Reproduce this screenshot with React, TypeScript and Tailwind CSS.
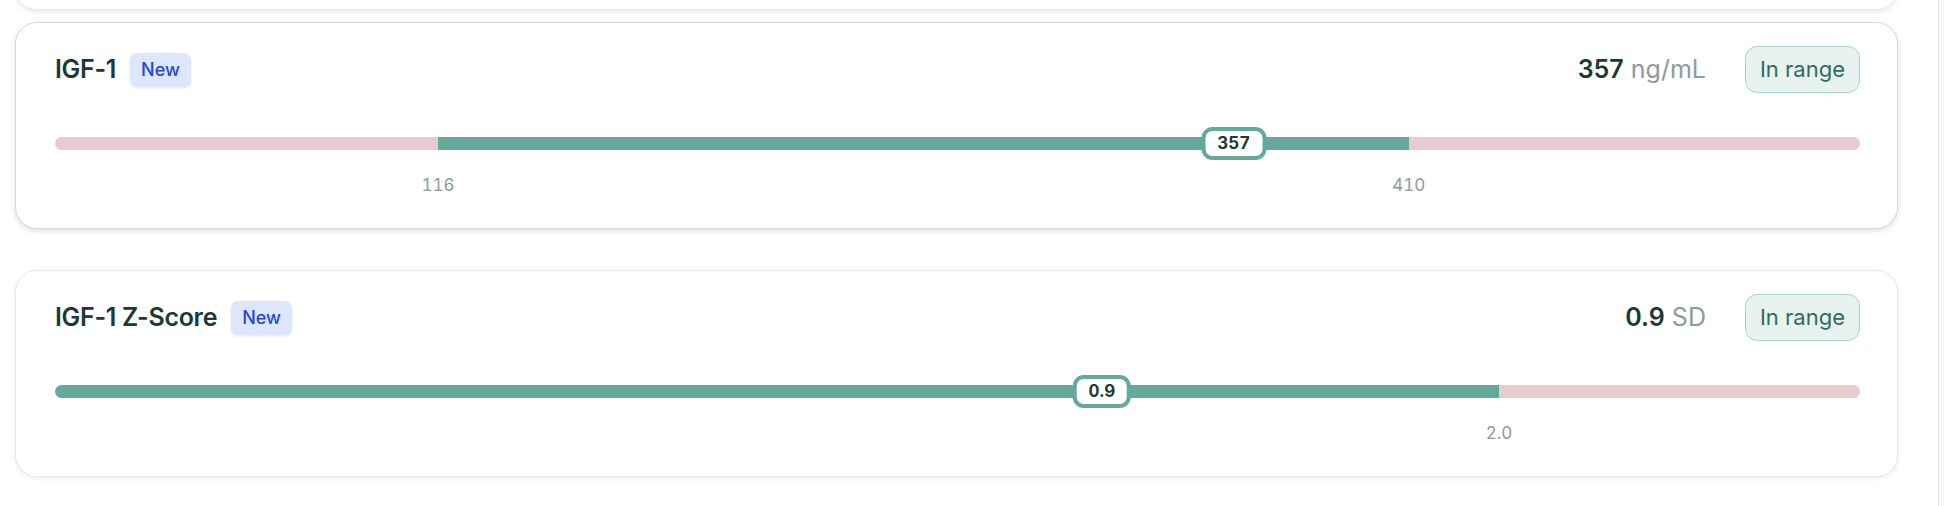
import React from 'react'

interface Marker {
  name: string
  value: number
  display: string
  unit: string
  low: number
  high: number
  min: number
  max: number
  tone: 'strong' | 'soft'
}

const markers: Marker[] = [
  { name: 'IGF-1', value: 357, display: '357', unit: 'ng/mL', low: 116, high: 410, min: 0, max: 546.67, tone: 'strong' },
  { name: 'IGF-1 Z-Score', value: 0.9, display: '0.9', unit: 'SD', low: -2, high: 2, min: -2, max: 3, tone: 'soft' },
]

function fmt(m: Marker, v: number) {
  return m.unit === 'SD' ? v.toFixed(1) : String(v)
}

function RangeBar({ m }: { m: Marker }) {
  const pct = (v: number) => ((v - m.min) / (m.max - m.min)) * 100
  const lo = pct(m.low)
  const hi = pct(m.high)
  const val = pct(m.value)
  // only show bounds that sit inside the bar
  const ticks = [m.low, m.high].filter((t) => t > m.min && t < m.max)

  return (
    <div className="mt-[34px]">
      <div className="relative flex h-[33px] items-center">
        <div className="flex h-[13px] w-full overflow-hidden rounded-full">
          <div className="bg-[#e6cbd0]" style={{ width: `${lo}%` }} />
          <div className="bg-[#64a99b]" style={{ width: `${hi - lo}%` }} />
          <div className="flex-1 bg-[#e6cbd0]" />
        </div>
        <div
          className="absolute top-0 flex h-[33px] -translate-x-1/2 items-center rounded-[11px] border-4 border-[#64a99b] bg-white px-3 text-[17px] font-bold tabular-nums text-[#1d3a35]"
          style={{ left: `${val}%` }}
        >
          {m.display}
        </div>
      </div>
      <div className="relative mt-[13px] h-6 text-[17px] leading-6 tabular-nums text-[#8c9b99]">
        {ticks.map((t) => (
          <span key={t} className="absolute top-0 -translate-x-1/2" style={{ left: `${pct(t)}%` }}>
            {fmt(m, t)}
          </span>
        ))}
      </div>
    </div>
  )
}

function MarkerCard({ m }: { m: Marker }) {
  return (
    <div
      className={
        m.tone === 'strong'
          ? 'rounded-[22px] border border-[#d6d8da] bg-white pt-[23px] pr-[37px] pb-[31px] pl-[39px] shadow-[0_2px_6px_rgba(0,0,0,0.12)]'
          : 'rounded-[22px] border border-[#e7e8ea] bg-white pt-[23px] pr-[37px] pb-[31px] pl-[39px] shadow-[0_2px_4px_rgba(0,0,0,0.07)]'
      }
    >
      <div className="flex h-[47px] items-center justify-between">
        <div className="flex items-center gap-[14px]">
          <h3 className="text-[25px] font-semibold tracking-[-0.3px] text-[#1a3a35]">{m.name}</h3>
          <span className="flex h-[34px] items-center rounded-[7px] bg-[#dce7fd] px-[11px] text-[18px] font-medium text-[#2746d8] shadow-[0_1px_3px_rgba(0,0,0,0.1)]">
            New
          </span>
        </div>
        <div className="flex items-center gap-[39px]">
          <div className="text-[25px]">
            <span className="font-semibold text-[#1a3a35]">{m.display}</span>{' '}
            <span className="text-[#8c9b99]">{m.unit}</span>
          </div>
          <span className="flex h-[47px] items-center rounded-[12px] border border-[#a9d4c9] bg-[#e8f3f0] px-[14px] text-[22px] text-[#2e6b5e]">
            In range
          </span>
        </div>
      </div>
      <RangeBar m={m} />
    </div>
  )
}

export default function App() {
  return (
    <div className="flex h-[506px] overflow-hidden bg-white font-['Inter','Noto_Sans',sans-serif]">
      <div className="flex-1 pr-[40px] pl-[15px]">
        {/* previous card, scrolled mostly out of view */}
        <div className="-mt-[111px] h-[120px] rounded-[22px] bg-white shadow-[0_2px_6px_rgba(0,0,0,0.12)]" />
        <div className="mt-[13px]">
          <MarkerCard m={markers[0]} />
        </div>
        <div className="mt-[41px]">
          <MarkerCard m={markers[1]} />
        </div>
      </div>
      <div className="w-[6px] border-l border-[#e4e4e4] bg-[#fafafa]" />
    </div>
  )
}
